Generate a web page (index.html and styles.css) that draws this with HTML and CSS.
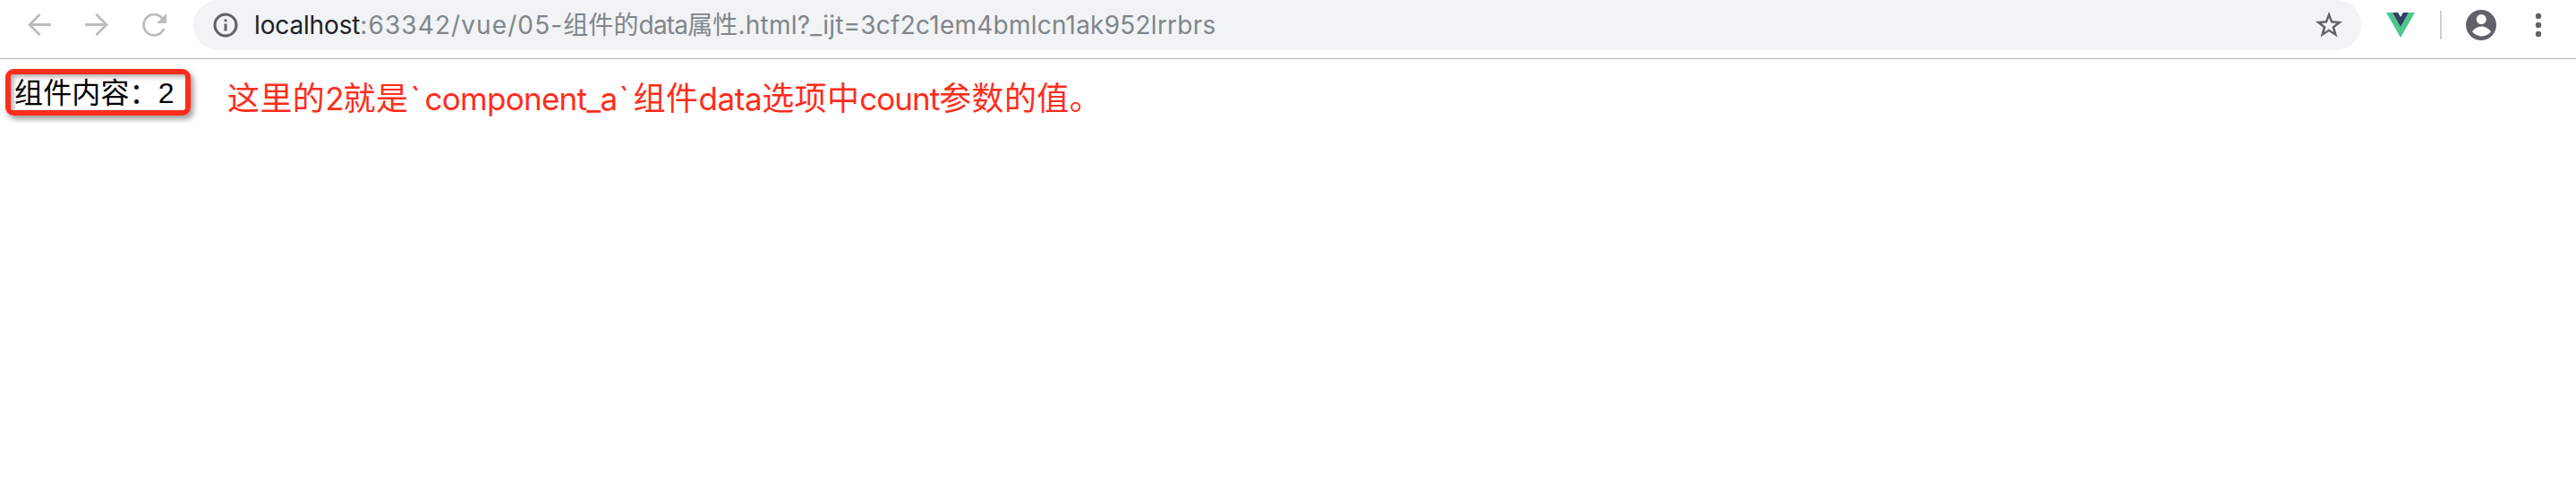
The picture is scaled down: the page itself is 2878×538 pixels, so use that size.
FILE: index.html
```
<!DOCTYPE html>
<html lang="zh">
<head>
<meta charset="utf-8">
<title>组件的data属性</title>
<link rel="stylesheet" href="styles.css">
</head>
<body>
<header class="toolbar">
  <nav class="nav">
    <svg class="nav-icon" width="32" height="32" viewBox="0 0 32 32"><path d="M29 15.500H5M16.500 4L5 15.500L16.500 27"/></svg>
    <svg class="nav-icon" width="32" height="32" viewBox="0 0 32 32"><path d="M3 15.500H27M15.500 4L27 15.500L15.500 27"/></svg>
    <svg class="nav-icon" width="32" height="32" viewBox="0 0 32 32"><path d="M25.500 8.800A11.600 11.600 0 1 0 27 20"/><path class="solid" d="M30 3V14H19Z"/></svg>
  </nav>
  <div class="omnibox">
    <svg class="info" width="28" height="28" viewBox="0 0 28 28"><circle cx="14" cy="14" r="12"/><path d="M14 12.500V20.500M14 7.500V10.300"/></svg>
    <div class="url"><span class="host">localhost</span><span class="port">:63342/vue/05-</span><span class="cjk">组件的</span><span class="data">data</span><span class="cjk">属性</span><span class="query">.html?_ijt=3cf2c1em4bmlcn1ak952lrrbrs</span></div>
    <svg class="star" width="32" height="32" viewBox="0 0 32 32"><path fill-rule="evenodd" d="M16 1L19.900 11.300L31 11.900L22.400 18.800L25.400 29.300L16 23.300L6.600 29.300L9.600 18.800L1 11.900L12.100 11.300ZM16 7.500L13.900 13.600L7.700 14L12.500 17.900L10.800 24L16 20.500L21.200 24L19.500 17.900L24.300 14L18.100 13.600Z"/></svg>
  </div>
  <div class="actions">
    <svg class="vue" width="32" height="28" viewBox="0 0 32 28"><path fill="#4fc68d" d="M0 0H7L16 15.500L25 0H32L16 28Z"/><path fill="#34405f" d="M7 0H13L16 5L19 0H25L16 16Z"/></svg>
    <span class="divider"></span>
    <svg class="avatar" width="34" height="34" viewBox="0 0 34 34"><circle cx="17" cy="17" r="17" fill="#5f6368"/><circle cx="17.300" cy="10.500" r="5.500" fill="#fff"/><path fill="#fff" d="M7 24.300C9.500 20.500 14 18.500 17.300 18.500S25.500 20.500 28 24.300C25.500 27.500 21.500 29.500 17.500 29.500S9.500 27.500 7 24.300Z"/></svg>
    <svg class="menu" width="8" height="28" viewBox="0 0 8 28"><circle cx="4" cy="4" r="3.200"/><circle cx="4" cy="14" r="3.200"/><circle cx="4" cy="24" r="3.200"/></svg>
  </div>
</header>
<main class="page">
  <div class="result">组件内容：2</div>
  <p class="note">这里的<span class="latin">2</span>就是<span class="latin tick">`</span><span class="latin code">component_a</span><span class="latin tick">`</span>组件<span class="latin data-word">data</span>选项中<span class="latin">count</span>参数的值。</p>
</main>
</body>
</html>
```
FILE: styles.css
```
body {
  margin: 0;
  background: #fff;
  font-family: "Liberation Sans", "Noto Sans CJK SC", sans-serif;
}
.toolbar {
  display: flex;
  box-sizing: border-box;
  height: 66px;
  border-bottom: 1px solid #b3b3b3;
}
.nav {
  display: flex;
  gap: 32px;
  width: 188px;
  height: 56px;
  padding-left: 28px;
  align-items: center;
}
.nav-icon {
  fill: none;
  stroke: #babcbe;
  stroke-width: 2.8;
}
.nav-icon .solid {
  fill: #babcbe;
  stroke: none;
}
.omnibox {
  display: flex;
  align-items: center;
  box-sizing: border-box;
  width: 2422px;
  height: 56px;
  padding: 0 20px 0 22px;
  border-radius: 28px;
  background: #f1f3f4;
}
.info {
  fill: none;
  stroke: #5f6368;
  stroke-width: 3;
}
.url {
  flex: 1;
  margin-left: 18px;
  font: 28px/56px Inter, "Noto Sans CJK SC", sans-serif;
  white-space: nowrap;
  color: #80868b;
}
.host {
  color: #202124;
  letter-spacing: -0.15px;
}
.port {
  letter-spacing: 1.1px;
}
.data {
  letter-spacing: -0.8px;
}
.cjk {
  letter-spacing: 0.1px;
}
.query {
  letter-spacing: 0.23px;
}
.star {
  fill: #5f6368;
}
.actions {
  display: flex;
  align-items: center;
  height: 56px;
  padding-left: 28px;
}
.divider {
  width: 2px;
  height: 32px;
  margin: 0 27px 0 28px;
  background: #cdcfd1;
}
.menu {
  margin-left: 43px;
  fill: #5f6368;
}
.page {
  display: flex;
  padding: 11px 0 0 6px;
}
.result {
  box-sizing: border-box;
  width: 207px;
  height: 52px;
  padding-left: 4px;
  border: 6px solid #ff2d1c;
  border-radius: 9px;
  box-shadow: 3px 4px 6px rgba(0, 0, 0, .4), inset 3px 3px 5px rgba(0, 0, 0, .3);
  font-size: 32px;
  line-height: 43px;
  letter-spacing: 0.15px;
  white-space: nowrap;
  color: #000;
}
.note {
  margin: 2px 0 0 41px;
  font: 36px/56px "Noto Sans CJK SC", sans-serif;
  letter-spacing: 0.4px;
  white-space: nowrap;
  color: #ff2d1c;
}
.latin {
  font-family: Inter, sans-serif;
  font-size: 35px;
  letter-spacing: -1px;
}
.code {
  letter-spacing: -0.7px;
}
.data-word {
  letter-spacing: -0.4px;
}
.tick {
  display: inline-block;
  box-sizing: border-box;
  width: 18px;
  padding-left: 2px;
}
```
